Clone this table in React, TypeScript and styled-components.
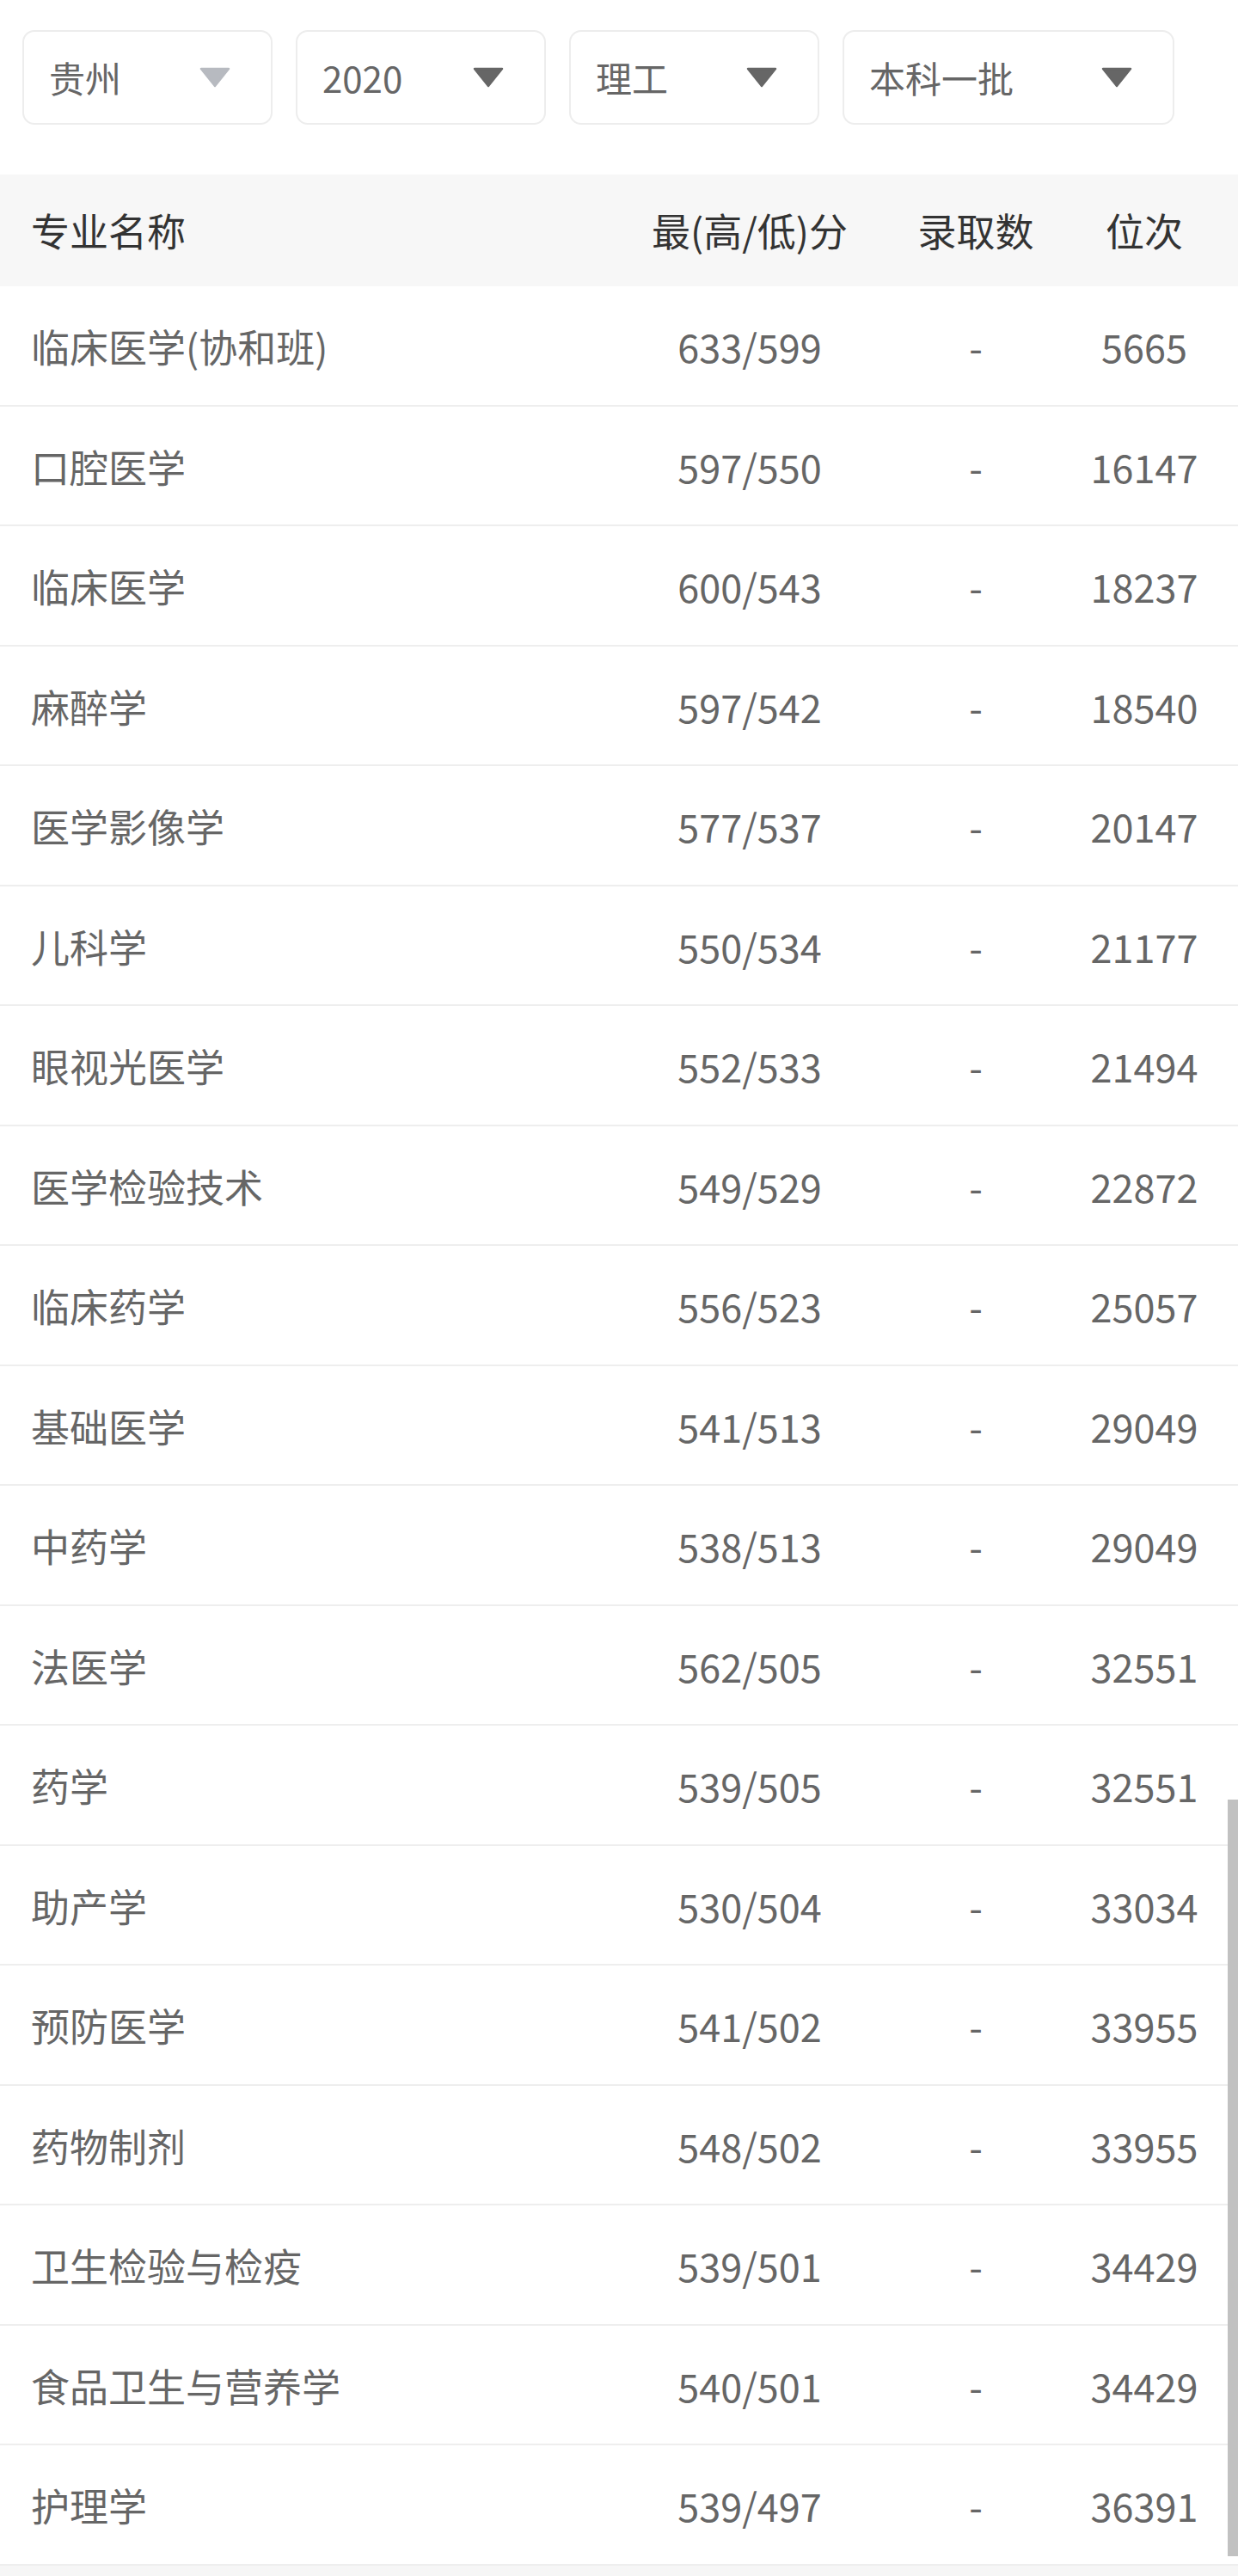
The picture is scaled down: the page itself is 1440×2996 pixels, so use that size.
import React from "react";
import styled, { createGlobalStyle } from "styled-components";

const GlobalStyle = createGlobalStyle`
  html, body {
    margin: 0;
    padding: 0;
    background: #f6f6f6;
    font-family: "Noto Sans CJK SC", "Noto Sans", sans-serif;
  }
  * { box-sizing: border-box; }
`;

const Page = styled.div`
  background: #ffffff;
  width: 1440px;
`;

const FilterBar = styled.div`
  display: flex;
  gap: 27px;
  padding: 35px 0 0 26px;
`;

const Select = styled.div<{ $w: number }>`
  width: ${(p) => p.$w}px;
  height: 110px;
  border: 2px solid #ededed;
  border-radius: 14px;
  background: #fff;
  display: flex;
  align-items: center;
  justify-content: space-between;
  padding: 0 47px 0 29px;
`;

const SelectLabel = styled.span`
  font-size: 42px;
  color: #666666;
  line-height: 1;
`;

const Arrow = styled.svg<{ $muted?: boolean }>`
  width: 36px;
  height: 24px;
  flex: none;
  fill: ${(p) => (p.$muted ? "#b7bac0" : "#666666")};
  stroke: ${(p) => (p.$muted ? "#b7bac0" : "#666666")};
`;

const Table = styled.div`
  position: relative;
  margin-top: 58px;
`;

const cols = "696px 352px 174px 218px";

const HeaderRow = styled.div`
  display: grid;
  grid-template-columns: ${cols};
  height: 130px;
  background: #f7f7f7;
  align-items: center;
`;

const Row = styled.div`
  display: grid;
  grid-template-columns: ${cols};
  height: 139.5px;
  border-bottom: 2px solid #eeeeee;
  align-items: center;
  padding-top: 3px;
`;

const Cell = styled.div<{ $head?: boolean; $left?: boolean }>`
  font-size: 45px;
  line-height: 1.2;
  color: ${(p) => (p.$head ? "#333333" : "#666666")};
  text-align: ${(p) => (p.$left ? "left" : "center")};
  padding-left: ${(p) => (p.$left ? "36px" : "0")};
  white-space: nowrap;
`;

const ScrollThumb = styled.div`
  position: absolute;
  right: 0;
  top: 1890px;
  width: 12px;
  height: 880px;
  background: #c1c1c1;
`;

const filters = [
  { label: "贵州", w: 291, muted: true },
  { label: "2020", w: 291, muted: false },
  { label: "理工", w: 291, muted: false },
  { label: "本科一批", w: 386, muted: false },
];

const rows: [string, string, string, string][] = [
  ["临床医学(协和班)", "633/599", "-", "5665"],
  ["口腔医学", "597/550", "-", "16147"],
  ["临床医学", "600/543", "-", "18237"],
  ["麻醉学", "597/542", "-", "18540"],
  ["医学影像学", "577/537", "-", "20147"],
  ["儿科学", "550/534", "-", "21177"],
  ["眼视光医学", "552/533", "-", "21494"],
  ["医学检验技术", "549/529", "-", "22872"],
  ["临床药学", "556/523", "-", "25057"],
  ["基础医学", "541/513", "-", "29049"],
  ["中药学", "538/513", "-", "29049"],
  ["法医学", "562/505", "-", "32551"],
  ["药学", "539/505", "-", "32551"],
  ["助产学", "530/504", "-", "33034"],
  ["预防医学", "541/502", "-", "33955"],
  ["药物制剂", "548/502", "-", "33955"],
  ["卫生检验与检疫", "539/501", "-", "34429"],
  ["食品卫生与营养学", "540/501", "-", "34429"],
  ["护理学", "539/497", "-", "36391"],
];

export default function App() {
  return (
    <>
      <GlobalStyle />
      <Page>
        <FilterBar>
          {filters.map((f) => (
            <Select key={f.label} $w={f.w}>
              <SelectLabel>{f.label}</SelectLabel>
              <Arrow $muted={f.muted} viewBox="0 0 36 24">
                <path d="M2 2 H34 L18 22 Z" strokeWidth="2.5" strokeLinejoin="round" />
              </Arrow>
            </Select>
          ))}
        </FilterBar>
        <Table>
          <HeaderRow>
            <Cell $head $left>专业名称</Cell>
            <Cell $head>最(高/低)分</Cell>
            <Cell $head>录取数</Cell>
            <Cell $head>位次</Cell>
          </HeaderRow>
          {rows.map((r, i) => (
            <Row key={i}>
              <Cell $left>{r[0]}</Cell>
              <Cell>{r[1]}</Cell>
              <Cell>{r[2]}</Cell>
              <Cell>{r[3]}</Cell>
            </Row>
          ))}
          <ScrollThumb />
        </Table>
      </Page>
    </>
  );
}
